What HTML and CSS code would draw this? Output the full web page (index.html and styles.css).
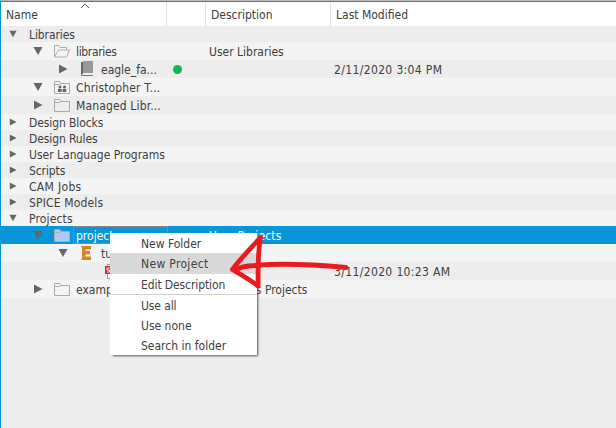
FILE: index.html
```
<!DOCTYPE html>
<html lang="en">
<head>
<meta charset="utf-8">
<title>Control Panel</title>
<link rel="stylesheet" href="styles.css">
</head>
<body>
<svg width="0" height="0" class="defs">
  <symbol id="down" viewBox="0 0 10 10"><path d="M.5 1h9L5 9z" fill="#666"/></symbol>
  <symbol id="right" viewBox="0 0 10 10"><path d="M1 .5v9L9.500 5z" fill="#666"/></symbol>
  <symbol id="folder" viewBox="0 0 18 14"><path class="body" d="M1.500 13.500v-12h5l1.500 2h8.500v10z"/><path class="line" d="M1.500 4.500h5l1.500-1"/></symbol>
</svg>
<div class="panel">
  <div class="header"><span class="h-name">Name<svg class="sort" width="10" height="6"><path d="M1 5l4-4 4 4" fill="none" stroke="#555"/></svg></span><span class="h-flag"></span><span class="h-desc">Description</span><span class="h-date">Last Modified</span></div>
  <div class="tree">
    <div class="row short"><div class="name l0"><svg class="tw small"><use href="#down"/></svg><span class="tight">Libraries</span></div></div>
    <div class="row"><div class="name l1"><svg class="tw"><use href="#down"/></svg><svg class="icon" viewBox="0 0 18 14"><path d="M1.500 13v-11.500h4l2 2h6v2M1.500 13l4-7h11l-3 7z" fill="none" stroke="#aaa"/></svg><span class="tighter">libraries</span></div><div class="desc">User Libraries</div></div>
    <div class="row"><div class="name l2"><svg class="tw"><use href="#right"/></svg><svg class="book" viewBox="0 0 14 16"><path d="M1 1h2v12H1z" fill="#666"/><path d="M3 0h10v12H3z" fill="#999"/><path d="M1.500 12v2.500H13" fill="none" stroke="#777"/></svg><span>eagle_fa...</span></div><div class="flag"><i class="dot"></i></div><div class="desc"></div><div class="date">2/11/2020 3:04 PM</div></div>
    <div class="row"><div class="name l1"><svg class="tw"><use href="#down"/></svg><svg class="icon" viewBox="0 0 18 14"><use href="#folder"/><g fill="#666"><circle cx="7" cy="7" r="1.500"/><circle cx="11.500" cy="7" r="1.500"/><path d="M5 9h3.700v3H5zM9.600 9h3.700v3H9.600z"/></g></svg><span class="loose">Christopher T...</span></div></div>
    <div class="row"><div class="name l1"><svg class="tw"><use href="#right"/></svg><svg class="icon"><use href="#folder"/></svg><span class="loose">Managed Libr...</span></div></div>
    <div class="row short"><div class="name l0"><svg class="tw small"><use href="#right"/></svg><span class="tight">Design Blocks</span></div></div>
    <div class="row short"><div class="name l0"><svg class="tw small"><use href="#right"/></svg><span class="tight">Design Rules</span></div></div>
    <div class="row short"><div class="name l0"><svg class="tw small"><use href="#right"/></svg><span>User Language Programs</span></div></div>
    <div class="row short"><div class="name l0"><svg class="tw small"><use href="#right"/></svg><span class="tight">Scripts</span></div></div>
    <div class="row short"><div class="name l0"><svg class="tw small"><use href="#right"/></svg><span class="wide">CAM Jobs</span></div></div>
    <div class="row short"><div class="name l0"><svg class="tw small"><use href="#right"/></svg><span class="loose">SPICE Models</span></div></div>
    <div class="row short"><div class="name l0"><svg class="tw small"><use href="#down"/></svg><span class="loose">Projects</span></div></div>
    <div class="row selected"><div class="name l1"><svg class="tw"><use href="#down"/></svg><svg class="icon"><use href="#folder"/></svg><span class="focus">projects</span></div><div class="desc loose">User Projects</div></div>
    <div class="row"><div class="name l2"><svg class="tw"><use href="#down"/></svg><svg class="eagle" viewBox="0 0 14 16"><path d="M2 1h10v3.500H6.500V6H11v3.500H6.500v2H12V15H2l1-2V3z" fill="#dc8226"/></svg><span>tutorial</span></div></div>
    <div class="row"><div class="name l3"><svg class="sch" viewBox="0 0 18 16"><path d="M2.500 1.500h12v14h-12z" fill="#f8f8f8" stroke="#999"/><path d="M0 3h9v8H0z" fill="#d9272e"/><path d="M4.500 5H2v2h2.500v2H2" fill="none" stroke="#fff"/></svg></div><div class="date">3/11/2020 10:23 AM</div></div>
    <div class="row"><div class="name l1"><svg class="tw"><use href="#right"/></svg><svg class="icon"><use href="#folder"/></svg><span>examples</span></div><div class="desc">Examples Projects</div></div>
  </div>
</div>
<div class="menu">
  <div class="item">New Folder</div>
  <div class="item active wide">New Project</div>
  <div class="item tight">Edit Description</div>
  <div class="sep"></div>
  <div class="item tight">Use all</div>
  <div class="item">Use none</div>
  <div class="item">Search in folder</div>
</div>
<svg class="arrow" viewBox="0 0 124 64" width="124" height="64"><g fill="none" stroke="#e81c1f" stroke-linecap="round" stroke-linejoin="round"><path stroke-width="5" d="M12 39C15 36 22 36 29 35.500C53 33 82 34 120 37.500"/><path stroke-width="4.800" d="M34.500 7.500C26 17 14 29 6.500 39.500C12 43 23 49 32 56C32.500 45 31 27 34.500 7.500"/></g></svg>
</body>
</html>
```
FILE: styles.css
```
* { box-sizing: border-box; }
body {
  margin: 0;
  width: 616px;
  height: 428px;
  overflow: hidden;
  position: relative;
  background: #ededed;
  color: #404040;
  font: 12px/16px "DejaVu Sans Condensed", "DejaVu Sans", sans-serif;
  font-stretch: condensed;
  white-space: nowrap;
}
.defs { position: absolute; }
.panel {
  height: 428px;
  border-left: 1px solid #0996d9;
  border-top: 1px solid #b9b9b9;
}
.header {
  display: grid;
  grid-template-columns: 166px 39px 125px 1fr;
  grid-template-rows: 24px;
  height: 25px;
  line-height: 26px;
  background: #fff;
  border-top: 1px solid #0996d9;
}
.header span { border-right: 1px solid #e0e0e0; padding-left: 5px; height: 24px; }
.header .h-date { border: 0; }
.h-name { position: relative; }
.sort { position: absolute; left: 79px; top: 1px; }
.row {
  display: grid;
  grid-template-columns: 166px 42px 125px 1fr;
  grid-template-rows: 100%;
  height: 18px;
  line-height: 18px;
}
.short { height: 16px; line-height: 16px; }
.row:nth-child(even) { background: #f4f4f4; }
.name { grid-column: 1; display: flex; align-items: center; }
.name > span { padding-top: 1px; }
.flag { grid-column: 2; display: flex; align-items: center; padding-left: 6px; }
.desc { grid-column: 3; padding-top: 1px; }
.date { grid-column: 4; padding-top: 1px; letter-spacing: 0.36px; }
.dot { width: 9px; height: 9px; border-radius: 50%; background: #17b451; }
.l0 { padding-left: 8px; }
.l1 { padding-left: 32px; }
.l2 { padding-left: 57px; }
.l3 { padding-left: 104px; }
.tight { letter-spacing: -0.1px; }
.tighter { letter-spacing: -0.35px; }
.loose { letter-spacing: 0.15px; }
.wide { letter-spacing: 0.33px; }
.tw { width: 10px; height: 10px; flex: none; }
.tw.small { width: 8px; height: 8px; margin-right: 12px; }
.icon { width: 18px; height: 14px; flex: none; margin: 0 5px 0 10px; }
.body { fill: var(--folder, none); stroke: #aaa; }
.line { fill: none; stroke: #aaa; }
.book, .eagle { width: 14px; height: 16px; flex: none; margin: 0 7px 0 12px; }
.eagle { margin-left: 11px; margin-right: 8px; }
.sch { width: 18px; height: 16px; flex: none; }
.name > span:not(.focus) { position: relative; top: 0.5px; }
.row.selected:nth-child(n) { background: #0996d9; color: #fff; }
.selected .icon { --folder: #a9cdf0; }
.name > .focus {
  --dots: #ff6a20 0 1px, #8a8080 1px 2px;
  flex: 1;
  height: 18px;
  margin-left: -3px;
  margin-right: -1px;
  padding: 1px 0 0 3px;
  background:
    repeating-linear-gradient(90deg, var(--dots)) top / 100% 1px no-repeat,
    repeating-linear-gradient(90deg, var(--dots)) bottom / 100% 1px no-repeat,
    repeating-linear-gradient(180deg, var(--dots)) left / 1px 100% no-repeat,
    repeating-linear-gradient(180deg, var(--dots)) right / 1px 100% no-repeat;
  line-height: 18px;
}
.menu {
  position: absolute;
  left: 110px;
  top: 233px;
  width: 147px;
  height: 122px;
  background: #fff;
  box-shadow: 2px 2px 2px -1px #555;
}
.item { height: 20px; line-height: 22px; padding-left: 31px; }
.item.active { height: 21px; line-height: 23px; background: #d9d9d9; }
.sep { height: 1px; background: #d0d0d0; }
.arrow { position: absolute; left: 226px; top: 230px; }
```
